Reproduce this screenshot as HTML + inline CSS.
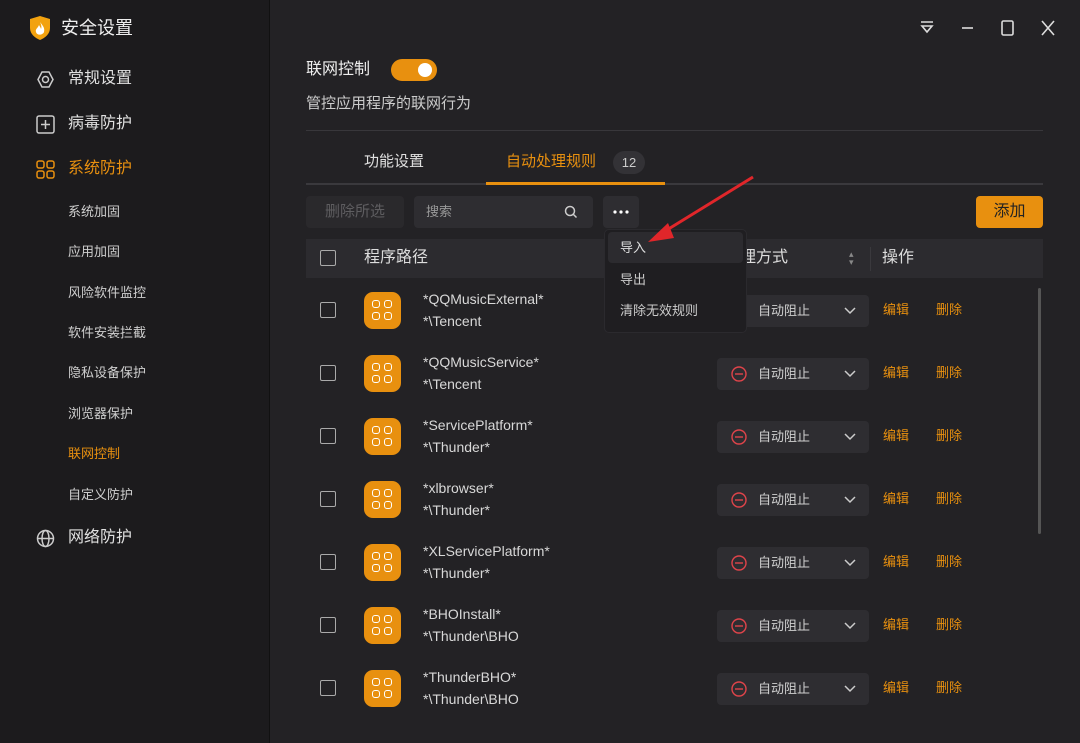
<!DOCTYPE html>
<html><head><meta charset="utf-8"><style>
*{margin:0;padding:0;box-sizing:border-box}
body{width:1080px;height:743px;background:#232225;font-family:"Liberation Sans","Noto Sans CJK SC",sans-serif;color:#d8d8d8;position:relative;overflow:hidden;line-height:1.35}
.abs{position:absolute}
#side{left:0;top:0;width:270px;height:743px;background:#1c1b1d;border-right:1px solid #111}
.nav{position:absolute;left:68px;font-size:16px;color:#e0e0e0}
.sub{position:absolute;left:68px;font-size:13px;color:#cfcfcf}
.or{color:#e8900f}
.cb{position:absolute;width:16px;height:16px;border:1.5px solid #aaa;border-radius:2px}
.app{position:absolute;left:364px;width:37px;height:37px;border-radius:9px;background:#e8900f}
.app i{position:absolute;width:8px;height:8px;border:1.6px solid #fff;border-radius:3px}
.t1,.t2{position:absolute;left:423px;font-size:14px;color:#d8d8d8}
.sel{position:absolute;left:717px;width:152px;height:32px;background:#2e2d31;border-radius:4px;font-size:13px;color:#d0d0d0}
.lk{position:absolute;font-size:13px;color:#e8900f}
</style></head><body>
<div id="side" class="abs">
<svg class="abs" style="left:29px;top:15px" width="22" height="26" viewBox="0 0 22 26"><path d="M11 1 L21 4 V13 C21 19 16 23 11 25 C6 23 1 19 1 13 V4 Z" fill="#f2a20f"/><path d="M11 7 C14 11 16 13 15 17 C14 20 8 21 7 17 C6 14 9 13 10 10 C11 12 12 13 12 14 C13 12 12 9 11 7Z" fill="#fff"/></svg>
<div class="abs" style="left:61px;top:16px;font-size:18px;color:#eee">安全设置</div>
<svg class="abs" style="left:36px;top:70px" width="19" height="19" viewBox="0 0 19 19" fill="none" stroke="#ccc" stroke-width="1.5"><path d="M6 2h7l4 7.5-4 7.5H6L2 9.5z"/><circle cx="9.5" cy="9.5" r="3"/></svg>
<div class="nav" style="top:68px">常规设置</div>
<svg class="abs" style="left:36px;top:115px" width="19" height="19" viewBox="0 0 19 19" fill="none" stroke="#ccc" stroke-width="1.5"><rect x="1" y="1" width="17" height="17" rx="2"/><path d="M9.5 5v9M5 9.5h9"/></svg>
<div class="nav" style="top:113px">病毒防护</div>
<svg class="abs" style="left:36px;top:160px" width="19" height="19" viewBox="0 0 19 19" fill="none" stroke="#e8900f" stroke-width="1.5"><rect x="1" y="1" width="7" height="7" rx="2"/><rect x="11" y="1" width="7" height="7" rx="2"/><rect x="1" y="11" width="7" height="7" rx="2"/><rect x="11" y="11" width="7" height="7" rx="2"/></svg>
<div class="nav or" style="top:158px">系统防护</div>
<div class="sub" style="top:203px">系统加固</div>
<div class="sub" style="top:243px">应用加固</div>
<div class="sub" style="top:284px">风险软件监控</div>
<div class="sub" style="top:324px">软件安装拦截</div>
<div class="sub" style="top:364px">隐私设备保护</div>
<div class="sub" style="top:405px">浏览器保护</div>
<div class="sub or" style="top:445px">联网控制</div>
<div class="sub" style="top:486px">自定义防护</div>
<svg class="abs" style="left:36px;top:529px" width="19" height="19" viewBox="0 0 19 19" fill="none" stroke="#ccc" stroke-width="1.5"><circle cx="9.5" cy="9.5" r="8"/><ellipse cx="9.5" cy="9.5" rx="3.5" ry="8"/><path d="M1.5 9.5h16"/></svg>
<div class="nav" style="top:527px">网络防护</div>
</div>
<svg class="abs" style="left:918px;top:18px" width="140" height="20" viewBox="0 0 140 20" fill="none" stroke="#ddd" stroke-width="1.6"><path d="M3 4h12M4 8h10l-5 6z"/><path d="M44 10h11"/><rect x="84" y="3" width="11" height="14" rx="1.5"/><path d="M124 3l12 14M136 3l-12 14"/></svg>
<div class="abs" style="left:306px;top:59px;font-size:16px;color:#eee">联网控制</div>
<div class="abs" style="left:391px;top:59px;width:46px;height:22px;border-radius:11px;background:#e8900f"><div class="abs" style="left:27px;top:4px;width:14px;height:14px;border-radius:50%;background:#fff"></div></div>
<div class="abs" style="left:306px;top:94px;font-size:15px;color:#ccc">管控应用程序的联网行为</div>
<div class="abs" style="left:306px;top:130px;width:737px;height:1px;background:#38373b"></div>
<div class="abs" style="left:364px;top:152px;font-size:15px;color:#e0e0e0">功能设置</div>
<div class="abs or" style="left:506px;top:152px;font-size:15px">自动处理规则</div>
<div class="abs" style="left:613px;top:151px;width:32px;height:23px;border-radius:12px;background:#333236;font-size:13px;color:#ccc;text-align:center;line-height:23px">12</div>
<div class="abs" style="left:306px;top:183px;width:737px;height:2px;background:#3a393d"></div>
<div class="abs" style="left:486px;top:182px;width:179px;height:3px;background:#e8900f"></div>
<div class="abs" style="left:306px;top:196px;width:98px;height:32px;background:#2a292c;border-radius:4px;font-size:15px;color:#5e5d60;text-align:center;line-height:32px">删除所选</div>
<div class="abs" style="left:414px;top:196px;width:179px;height:32px;background:#2e2d31;border-radius:4px;font-size:13px;color:#999;padding-left:12px;line-height:32px">搜索</div>
<svg class="abs" style="left:564px;top:205px" width="14" height="14" viewBox="0 0 14 14" fill="none" stroke="#ccc" stroke-width="1.5"><circle cx="6" cy="6" r="4.5"/><path d="M9.5 9.5l3 3"/></svg>
<div class="abs" style="left:603px;top:196px;width:36px;height:32px;background:#2e2d31;border-radius:4px"><svg style="position:absolute;left:10px;top:14px" width="16" height="4"><circle cx="2" cy="2" r="1.6" fill="#fff"/><circle cx="8" cy="2" r="1.6" fill="#fff"/><circle cx="14" cy="2" r="1.6" fill="#fff"/></svg></div>
<div class="abs" style="left:976px;top:196px;width:67px;height:32px;background:#e8900f;border-radius:4px;font-size:16px;color:#222;text-align:center;line-height:32px">添加</div>
<div class="abs" style="left:306px;top:239px;width:737px;height:39px;background:#2c2b2f"></div>
<div class="cb" style="left:320px;top:250px"></div>
<div class="abs" style="left:364px;top:247px;font-size:16px;color:#ddd">程序路径</div>
<div class="abs" style="left:740px;top:247px;font-size:16px;color:#ddd">理方式</div>
<div class="abs" style="left:849px;top:250px;font-size:9px;color:#888;line-height:8px">▴<br>▾</div>
<div class="abs" style="left:870px;top:247px;width:1px;height:24px;background:#3a393d"></div>
<div class="abs" style="left:882px;top:247px;font-size:16px;color:#ddd">操作</div>
<div class="abs" style="left:1038px;top:288px;width:3px;height:246px;background:#555;border-radius:2px"></div>
<div id="rows"></div>
<div class="abs" style="left:604px;top:229px;width:143px;height:104px;background:#1f1e21;border-radius:5px;border:1px solid #2b2a2e"></div>
<div class="abs" style="left:608px;top:232px;width:135px;height:31px;background:#2c2b2f;border-radius:4px"></div>
<div class="abs" style="left:620px;top:239px;font-size:13px;color:#ddd">导入</div>
<div class="abs" style="left:620px;top:271px;font-size:13px;color:#ccc">导出</div>
<div class="abs" style="left:620px;top:302px;font-size:13px;color:#ccc">清除无效规则</div>
<svg class="abs" style="left:0;top:0" width="1080" height="743"><line x1="753" y1="177" x2="662" y2="233" stroke="#e0262a" stroke-width="3"/><path d="M648 242 L668 223 L674 238 Z" fill="#e0262a"/></svg>
<script>
var d=[["*QQMusicExternal*","*\\Tencent"],["*QQMusicService*","*\\Tencent"],["*ServicePlatform*","*\\Thunder*"],["*xlbrowser*","*\\Thunder*"],["*XLServicePlatform*","*\\Thunder*"],["*BHOInstall*","*\\Thunder\\BHO"],["*ThunderBHO*","*\\Thunder\\BHO"]];
var h="";d.forEach(function(r,i){var c=310+63*i;
h+='<div class="cb" style="left:320px;top:'+(c-8)+'px"></div>';
h+='<div class="app" style="top:'+(c-18)+'px"><i style="left:8px;top:8px"></i><i style="left:20px;top:8px"></i><i style="left:8px;top:20px"></i><i style="left:20px;top:20px"></i></div>';
h+='<div class="t1" style="top:'+(c-20)+'px">'+r[0]+'</div><div class="t2" style="top:'+(c+2)+'px">'+r[1]+'</div>';
h+='<div class="sel" style="top:'+(c-15)+'px"><svg style="position:absolute;left:14px;top:8px" width="16" height="16" viewBox="0 0 16 16" fill="none" stroke="#e0444a" stroke-width="1.4"><circle cx="8" cy="8" r="7"/><path d="M4 8h8"/></svg><span style="position:absolute;left:41px;top:7px">自动阻止</span><svg style="position:absolute;left:127px;top:12px" width="12" height="8" viewBox="0 0 12 8" fill="none" stroke="#ccc" stroke-width="1.5"><path d="M1 1l5 5 5-5"/></svg></div>';
h+='<div class="lk" style="left:883px;top:'+(c-9)+'px">编辑</div><div class="lk" style="left:936px;top:'+(c-9)+'px">删除</div>';});
document.getElementById("rows").innerHTML=h;
</script>
</body></html>
